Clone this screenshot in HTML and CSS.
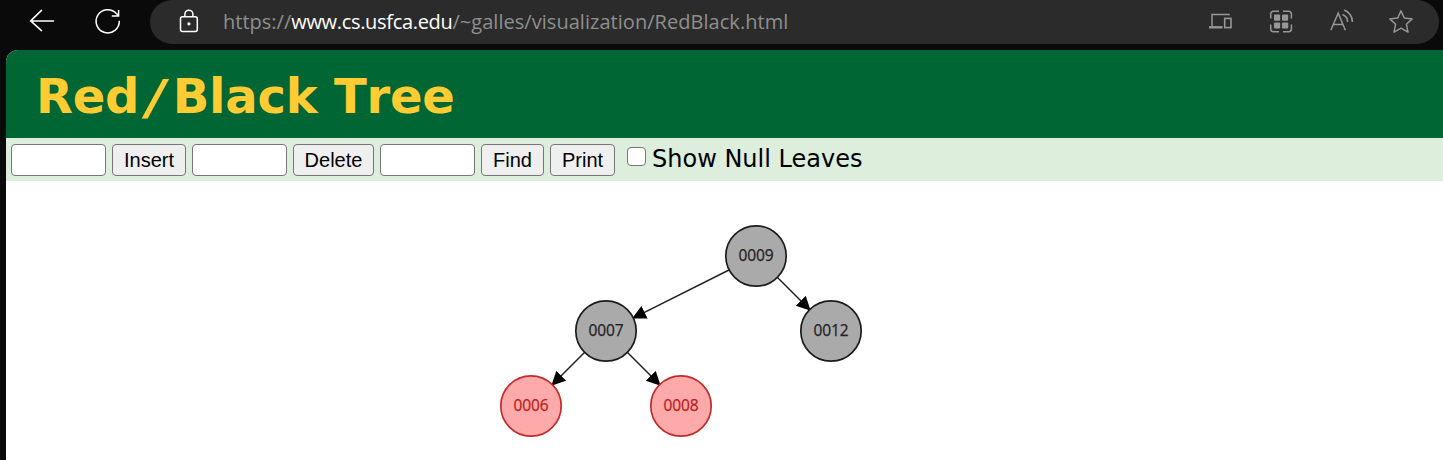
FILE: index.html
```html
<!DOCTYPE html>
<html lang="en">
<head>
<meta charset="utf-8">
<title>Red/Black Tree Visualization</title>
<link rel="stylesheet" href="styles.css">
</head>
<body>
<header class="browser-bar">
  <svg class="nav-icons" width="150" height="44" viewBox="0 0 150 44" fill="none" stroke="#fff" stroke-width="1.5" stroke-linecap="round" stroke-linejoin="round">
    <path d="M53.5 20.9H30.5M41.5 10.4L30.7 20.9L41.5 30.6"/>
    <path d="M119.3 20.8A11.6 11.6 0 1 1 116.4 13.6L118.6 15.9M118.6 10V16H111.8" stroke-linecap="butt" stroke-linejoin="miter"/>
  </svg>
  <div class="address-bar">
    <svg class="lock" width="20" height="24" viewBox="0 0 20 24" fill="none" stroke="#fff" stroke-width="1.5">
      <rect x="1.5" y="7.7" width="16.8" height="14.8" rx="2"/>
      <path d="M5.9 7.5V5.2a4 4 0 0 1 8 0V7.5"/>
      <circle cx="9.9" cy="14.8" r="1.6" fill="#fff" stroke="none"/>
    </svg>
    <div class="url"><span class="scheme">https://</span><span class="host">www.cs.usfca.edu</span><span class="path">/~galles/visualization/RedBlack.html</span></div>
    <svg class="actions" width="210" height="44" viewBox="1205 0 210 44" fill="none" stroke="#979797" stroke-width="1.5">
      <path d="M1229.8 14.6H1212V26" />
      <path d="M1209 27.3H1222.5" stroke-width="2.4"/>
      <rect x="1224.7" y="18.4" width="6.3" height="9.2" stroke-width="1.6"/>
      <path d="M1270.7 18.5V14a2.7 2.7 0 0 1 2.7-2.7H1279M1283 11.3H1288.7a2.7 2.7 0 0 1 2.7 2.7V18.5M1291.4 24.5V29a2.7 2.7 0 0 1-2.7 2.7H1283M1279 31.7H1273.4a2.7 2.7 0 0 1-2.7-2.7V24.5"/>
      <g fill="#979797" stroke="none">
        <rect x="1274" y="14.6" width="6.2" height="6.2" rx="1"/>
        <rect x="1282" y="14.6" width="6.2" height="6.2" rx="1"/>
        <rect x="1274" y="22.4" width="6.2" height="6.2" rx="1"/>
        <rect x="1282" y="22.4" width="6.2" height="6.2" rx="1"/>
      </g>
      <path d="M1330.8 30.3L1338.2 13.2L1345.4 30.3M1333.2 24.4H1343"/>
      <path d="M1342.5 14.4Q1347.8 16.6 1347.6 22M1344.3 10.1Q1352.2 13.5 1352.4 22" stroke-width="1.6"/>
      <path d="M1401 10.9L1404.3 18L1412.2 18.9L1406.4 24.2L1408 32.1L1401 28.2L1394 32.1L1395.6 24.2L1389.8 18.9L1397.7 18Z" stroke-linejoin="round" stroke-width="1.5"/>
    </svg>
  </div>
</header>
<main class="page">
  <div class="banner"><h1 class="title">Red<span class="slash">/</span>Black Tree</h1></div>
  <div class="controls">
    <input class="field" type="text" aria-label="Insert value"><button class="btn insert">Insert</button>
    <input class="field" type="text" aria-label="Delete value"><button class="btn delete">Delete</button>
    <input class="field" type="text" aria-label="Find value"><button class="btn find">Find</button>
    <button class="btn print">Print</button>
    <label class="toggle"><input class="check" type="checkbox"><span>Show Null Leaves</span></label>
  </div>
  <svg class="tree" width="1437" height="279" viewBox="6 181 1437 279">
    <defs>
      <marker id="arrow" markerUnits="userSpaceOnUse" markerWidth="15" markerHeight="15" refX="13.5" refY="7" orient="auto"><path d="M0 0L14 7L0 14Z"/></marker>
    </defs>
    <g class="edges">
      <path d="M729 270L632.5 318.3"/>
      <path d="M777 277L810.3 310.3"/>
      <path d="M585 352L551.7 385.3"/>
      <path d="M627 352L660.3 385.3"/>
    </g>
    <g class="node black"><circle cx="756" cy="256" r="30.2"/><text x="756" y="260.6" textLength="35">0009</text></g>
    <g class="node black"><circle cx="606" cy="331" r="30.2"/><text x="606" y="335.6" textLength="35">0007</text></g>
    <g class="node black"><circle cx="831" cy="331" r="30.2"/><text x="831" y="335.6" textLength="35">0012</text></g>
    <g class="node red"><circle cx="531" cy="406" r="30.2"/><text x="531" y="410.6" textLength="35">0006</text></g>
    <g class="node red"><circle cx="681" cy="406" r="30.2"/><text x="681" y="410.6" textLength="35">0008</text></g>
  </svg>
</main>
</body>
</html>
```
FILE: styles.css
```css
* { box-sizing: border-box; }
body { margin: 0; height: 460px; overflow: hidden; background: #0a0a0a; }
svg { display: block; flex: none; }
.browser-bar { display: flex; height: 50px; background: #0a0a0a; }
.address-bar {
  display: flex; align-items: flex-start; width: 1289px; height: 44px;
  padding-left: 29px; background: #2b2b2b; border-radius: 22px;
}
.lock { margin-top: 9px; }
.url {
  margin-left: 24px; width: 982px; line-height: 44px; white-space: nowrap;
  font-family: "Open Sans", "Noto Sans", sans-serif; font-size: 20px; color: #8f8f8f;
}
.host { color: #fff; letter-spacing: -0.32px; }
.path { letter-spacing: 0.04px; }
.page { margin-left: 6px; height: 410px; background: #fff; border-top-left-radius: 12px; overflow: hidden; }
.banner { height: 88px; padding-left: 30px; background: #006633; }
.title {
  margin: 0; font: bold 48px/92px "DejaVu Sans", Verdana, sans-serif;
  font-kerning: none; letter-spacing: -0.2px; color: #ffcc33; white-space: nowrap;
}
.slash { display: inline-block; margin: 0 8px; transform: translateY(1px) scaleX(1.15) skewX(-9deg); }
.controls {
  display: flex; align-items: flex-start; gap: 6px; height: 43px;
  padding: 6px 5px; background: #ddeedd;
}
.field { width: 95px; height: 32px; margin: 0; border: 1px solid #767676; border-radius: 4px; background: #fff; }
.btn {
  height: 32px; margin: 0; padding: 0; border: 1px solid #767676; border-radius: 4px;
  background: #efefef; color: #000; font: 20px/28px "Liberation Sans", Arial, sans-serif;
}
.insert { width: 74px; }
.delete { width: 81px; }
.find { width: 63px; }
.print { width: 65px; }
.toggle {
  display: flex; margin-left: 6px; gap: 6px; white-space: nowrap;
  font: 24px/31px "DejaVu Sans", Verdana, sans-serif; color: #000;
}
.check {
  appearance: none; width: 19px; height: 19px; margin: 3px 0 0;
  border: 1.5px solid #767676; border-radius: 4px; background: #fff;
}
.edges { fill: none; stroke: #222; stroke-width: 1.5; }
.edges path { marker-end: url(#arrow); }
.node { stroke-width: 1.7; }
.node text { font: 15.5px "Open Sans", "Noto Sans", sans-serif; text-anchor: middle; stroke-width: 0.25; }
.black circle { fill: #aaa; stroke: #1c1c1c; }
.black text { fill: #222; stroke: #222; }
.red circle { fill: #faa; stroke: #c12b2b; }
.red text { fill: #b82020; stroke: #b82020; }
#arrow path { fill: #000; stroke: none; }
```
